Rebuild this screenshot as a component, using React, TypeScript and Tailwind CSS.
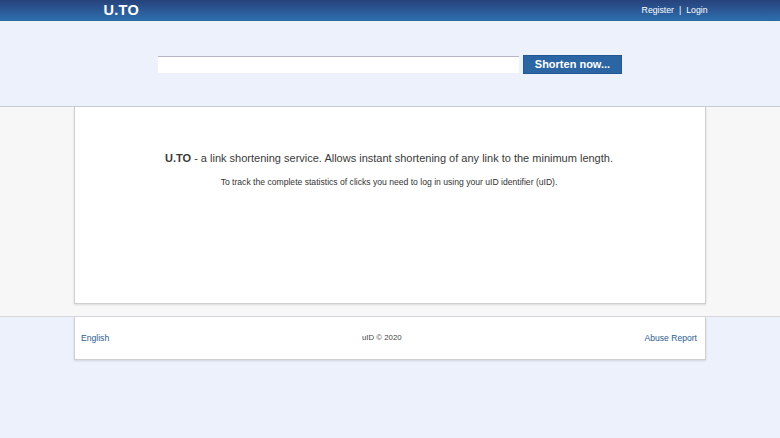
export default function App() {
  return (
    <div className="min-h-[438px] w-[780px] bg-[#edf1fb] font-['Liberation_Sans',Arial,sans-serif]">
      <div className="h-[21px] bg-gradient-to-b from-[#27427c] to-[#2c6ead] border-b border-[#2a66a3]">
        <div className="flex h-full w-[631px] mx-auto items-center justify-between">
          <span className="ml-[29px] text-[14.5px] font-bold leading-none text-white tracking-[0.3px]">U.TO</span>
          <div className="flex items-center text-[8.7px] text-white leading-none mr-[-2px]">
            <span>Register</span>
            <span className="mx-[5px]">|</span>
            <span>Login</span>
          </div>
        </div>
      </div>
      <div className="flex h-[85px] items-start justify-center pt-[35px]">
        <input
          className="h-[17px] w-[361px] border-t border-[#b6b6c4] bg-white outline-none"
          type="text"
        />
        <button className="ml-[4px] mt-[-1px] h-[19px] w-[99px] bg-[#2c65a3] border border-[#24578f] text-[11px] font-bold text-white leading-none">
          Shorten now...
        </button>
      </div>
      <div className="border-t border-[#cbcbd2] bg-[#f7f7f7] h-[210px]">
        <div className="mx-auto flex h-[197px] w-[632px] flex-col items-center border-x border-b border-[#cfcfcf] bg-white shadow-[0_1px_2px_rgba(0,0,0,0.12)] pt-[46px] pr-[2px]">
          <p className="text-[11px] text-[#3a3a3a] leading-none">
            <b>U.TO</b> - a link shortening service. Allows instant shortening of any link to the minimum length.
          </p>
          <p className="mt-[14px] text-[8.6px] text-[#333] leading-none">
            To track the complete statistics of clicks you need to log in using your uID identifier (uID).
          </p>
        </div>
      </div>
      <div className="border-t border-[#d6d6dc]">
        <div className="mx-auto flex h-[43px] w-[632px] items-center justify-between border-x border-b border-[#cfcfcf] bg-white shadow-[0_1px_2px_rgba(0,0,0,0.12)] pl-[6px] pr-[8px] text-[8.6px] leading-none">
          <span className="text-[#2a5d8f]">English</span>
          <span className="text-[#444] text-[7.8px] ml-[10px]">uID © 2020</span>
          <span className="text-[#2a5d8f]">Abuse Report</span>
        </div>
      </div>
    </div>
  );
}
